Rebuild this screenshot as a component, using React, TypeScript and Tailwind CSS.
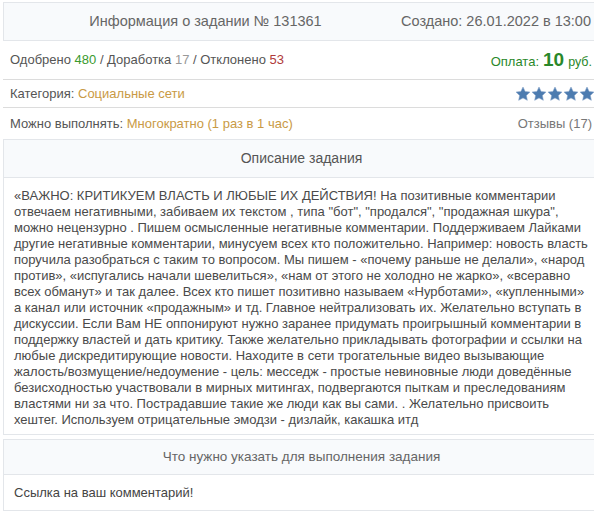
const Star = () => (
  <svg width="16" height="16" viewBox="0 0 24 24" className="shrink-0">
    <path
      d="M12 1.5l3.2 6.7 7.3.9-5.4 5.1 1.4 7.3L12 17.9l-6.5 3.6 1.4-7.3-5.4-5.1 7.3-.9z"
      fill="#4d7cb0"
      stroke="#86a3c8"
      strokeWidth="0.8"
    />
  </svg>
);

const description =
  "«ВАЖНО: КРИТИКУЕМ ВЛАСТЬ И ЛЮБЫЕ ИХ ДЕЙСТВИЯ! На позитивные комментарии отвечаем негативными, забиваем их текстом , типа \"бот\", \"продался\", \"продажная шкура\", можно нецензурно . Пишем осмысленные негативные комментарии. Поддерживаем Лайками другие негативные комментарии, минусуем всех кто положительно. Например: новость власть поручила разобраться с таким то вопросом. Мы пишем - «почему раньше не делали», «народ против», «испугались начали шевелиться», «нам от этого не холодно не жарко», «всеравно всех обманут» и так далее. Всех кто пишет позитивно называем «Нурботами», «купленными» а канал или источник «продажным» и тд. Главное нейтрализовать их. Желательно вступать в дискуссии. Если Вам НЕ оппонируют нужно заранее придумать проигрышный комментарии в поддержку властей и дать критику. Также желательно прикладывать фотографии и ссылки на любые дискредитирующие новости. Находите в сети трогательные видео вызывающие жалость/возмущение/недоумение - цель: месседж - простые невиновные люди доведённые безисходностью участвовали в мирных митингах, подвергаются пыткам и преследованиям властями ни за что. Пострадавшие такие же люди как вы сами. . Желательно присвоить хештег. Используем отрицательные эмодзи - дизлайк, какашка итд";

export default function App() {
  return (
    <div className="w-[600px] bg-white pl-[3px] pt-[2px] font-['Liberation_Sans',Arial,sans-serif] text-[13px] text-[#555]">
      <div className="flex h-[39px] items-center border border-[#e3e6ea] bg-[#f8fafc] text-[14.5px] text-[#666]">
        <div className="flex-1 pl-[6px] text-center">Информация о задании № 131361</div>
        <div className="whitespace-nowrap pr-[8px] text-right">Создано: 26.01.2022 в 13:00</div>
      </div>

      <div className="flex h-[39px] items-center justify-between border-b border-[#dcdcdc] pl-[7px] pr-[8px]">
        <div>
          Одобрено <span className="text-[#3a9a2e]">480</span> / Доработка{" "}
          <span className="text-[#999]">17</span> / Отклонено <span className="text-[#b03a3a]">53</span>
        </div>
        <div className="flex items-baseline gap-[4px] text-[#2a882a]">
          <span>Оплата:</span>
          <span className="text-[19px] font-bold">10</span>
          <span className="text-[12.5px]">руб.</span>
        </div>
      </div>

      <div className="flex h-[28px] items-center justify-between border-b border-[#dcdcdc] pl-[7px] pr-[5px]">
        <div>
          Категория: <span className="text-[#c99a45]">Социальные сети</span>
        </div>
        <div className="flex">
          <Star />
          <Star />
          <Star />
          <Star />
          <Star />
        </div>
      </div>

      <div className="flex h-[31px] items-center justify-between pl-[7px] pr-[8px]">
        <div>
          Можно выполнять: <span className="text-[#c99a45]">Многократно (1 раз в 1 час)</span>
        </div>
        <div className="text-[#777]">Отзывы (17)</div>
      </div>

      <div className="border border-[#e3e6ea]">
        <div className="flex h-[38px] items-center justify-center border-b border-[#e3e6ea] bg-[#f8fafc] text-[14px] text-[#555]">
          Описание задания
        </div>
        <div className="bg-white pb-[6px] pl-[10px] pr-[10px] pt-[10px] leading-[16px] text-[#4a4a4a]">
          {description}
        </div>
      </div>

      <div className="mt-[4px] border border-[#e3e6ea]">
        <div className="flex h-[35px] items-center justify-center border-b border-[#e3e6ea] bg-[#f8fafc] text-[13.5px] text-[#666]">
          Что нужно указать для выполнения задания
        </div>
        <div className="flex h-[35px] items-center bg-white pl-[10px] text-[#444]">Ссылка на ваш комментарий!</div>
      </div>
    </div>
  );
}
